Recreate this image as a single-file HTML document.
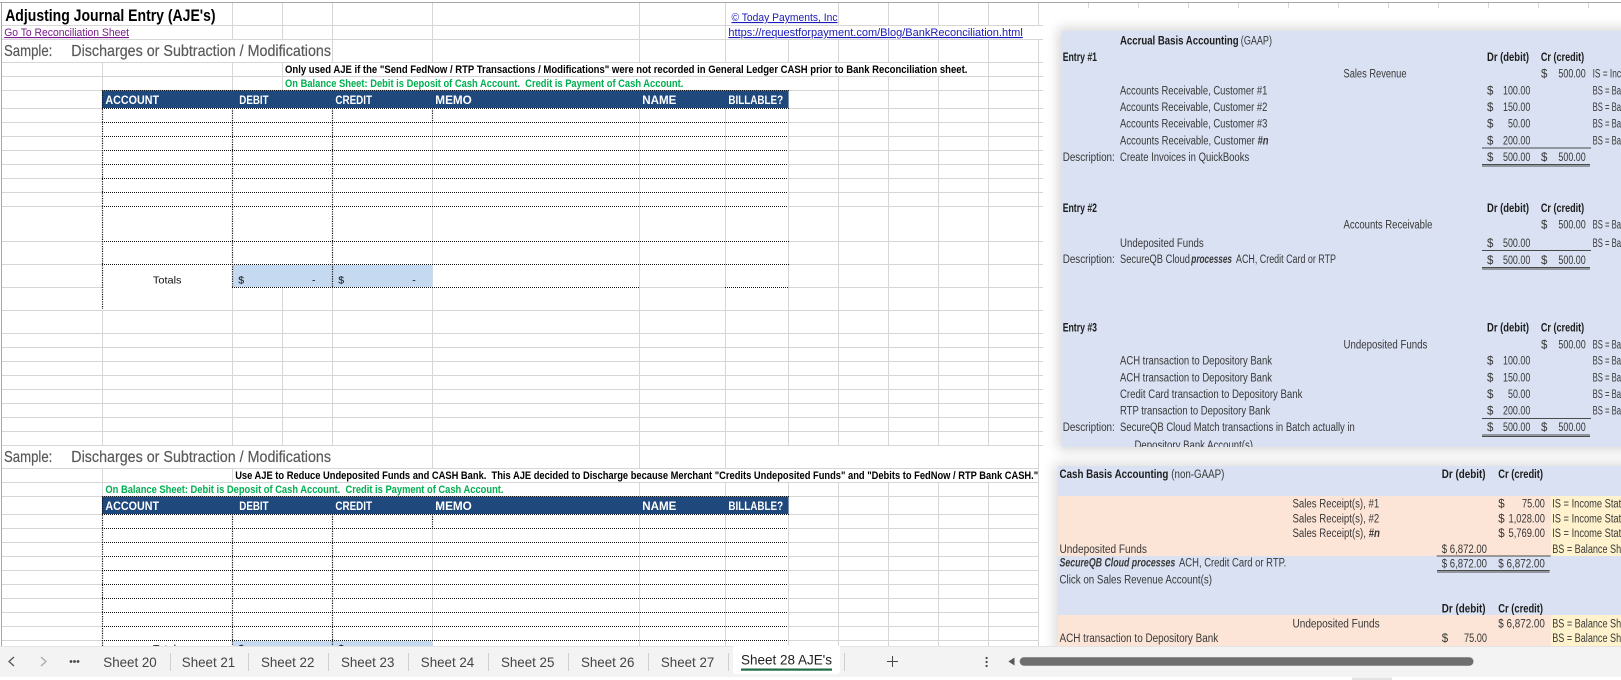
<!DOCTYPE html>
<html>
<head>
<meta charset="utf-8">
<title>Adjusting Journal Entry</title>
<style>
html,body{margin:0;padding:0;background:#fff;width:1621px;height:680px;overflow:hidden}
svg{display:block}
text{font-family:"Liberation Sans",sans-serif;white-space:pre}
.b{font-weight:700}
.n{font-size:11px;font-weight:700;fill:#000}
.g{font-size:11px;font-weight:700;fill:#00b050}
.h{font-size:12px;font-weight:700;fill:#fff}
.s{font-size:16px;fill:#595959;stroke:#595959;stroke-width:.2px}
.l{font-size:11px}
.p{font-size:11.5px;fill:#383838}
.pb{font-size:11.5px;fill:#1c1c1c;font-weight:700}
.t{font-size:14px;fill:#444}
.c{font-size:10.5px;fill:#111}
</style>
</head>
<body>
<svg xmlns="http://www.w3.org/2000/svg" width="1621" height="680" viewBox="0 0 1621 680">
<defs>
<filter id="sh" x="-10%" y="-10%" width="120%" height="120%"><feGaussianBlur stdDeviation="6"/></filter>
<clipPath id="c1"><rect x="1062" y="31" width="559" height="416"/></clipPath>
</defs>
<rect width="1621" height="680" fill="#fff"/>

<!-- horizontal grid -->
<path stroke="#d6d6d6" stroke-width="1" fill="none" d="M1 25.5H1043M1 39.5H1043M1 62.5H1043M1 76.5H1043M1 90.5H1043
M1 108.5H102M1 122.5H102M1 136.5H102M1 150.5H102M1 164.5H102M1 178.5H102M1 192.5H102M1 206.5H102M1 241.5H102M1 264.5H102M1 287.5H102
M789 108.5H1043M789 122.5H1043M789 136.5H1043M789 150.5H1043M789 164.5H1043M789 178.5H1043M789 192.5H1043M789 206.5H1043M789 241.5H1043M789 264.5H1043M789 287.5H1043M639 287.5H725
M1 310.5H1043M1 333.5H1043M1 347.5H1043M1 361.5H1043M1 375.5H1043M1 389.5H1043M1 403.5H1043M1 417.5H1043M1 431.5H1043M1 445.5H1043
M1 468.5H1038M1 482.5H1038
M1 496.5H102M1 514.5H102M1 528.5H102M1 542.5H102M1 556.5H102M1 570.5H102M1 584.5H102M1 598.5H102M1 612.5H102M1 626.5H102M1 640.5H102
M789 496.5H1038M789 514.5H1038M789 528.5H1038M789 542.5H1038M789 556.5H1038M789 570.5H1038M789 584.5H1038M789 598.5H1038M789 612.5H1038M789 626.5H1038M789 640.5H1038"/>
<!-- vertical grid -->
<path stroke="#d6d6d6" stroke-width="1" fill="none" d="M102.5 62V90M102.5 310V445M102.5 468V497
M232.5 2V39M232.5 62V90M232.5 287V445M232.5 468V482
M282.5 2V39M282.5 62V90M282.5 287V445
M332.5 2V62M332.5 287V445
M432.5 2V62M432.5 122V468M432.5 528V646
M639.5 2V62M639.5 108V468M639.5 482V496M639.5 514V646
M725.5 2V62M725.5 108V468M725.5 482V496M725.5 514V646
M788.5 39V62M788.5 90V445M788.5 482V646
M838.5 2V25M838.5 39V62M838.5 76V445M838.5 482V646
M888.5 2V25M888.5 39V62M888.5 76V445M888.5 482V646
M938.5 2V25M938.5 39V62M938.5 76V445M938.5 482V646
M988.5 2V25M988.5 39V445M988.5 482V646
M1038.5 2V25M1038.5 39V646"/>
<path stroke="#d6d6d6" fill="none" d="M1088.5 2V8M1138.5 2V8M1188.5 2V8M1238.5 2V8M1288.5 2V8M1338.5 2V8M1388.5 2V8M1438.5 2V8M1488.5 2V8M1538.5 2V8M1588.5 2V8"/>
<path stroke="#a6a6a6" stroke-width="1" fill="none" d="M0 2.5H1621M1.5 2V646"/>

<!-- top texts -->
<text x="5.2" y="21" class="b" font-size="16.5" fill="#000" textLength="210.4" lengthAdjust="spacingAndGlyphs">Adjusting Journal Entry (AJE's)</text>
<text x="4.2" y="36" class="l" fill="#7b1a8e" text-decoration="underline" textLength="124.8" lengthAdjust="spacingAndGlyphs">Go To Reconciliation Sheet</text>
<text x="731.5" y="21" class="l" fill="#1a1ab8" text-decoration="underline" textLength="106" lengthAdjust="spacingAndGlyphs">© Today Payments, Inc</text>
<text x="728.4" y="36" class="l" fill="#1a1ab8" text-decoration="underline" textLength="294.4" lengthAdjust="spacingAndGlyphs">https://requestforpayment.com/Blog/BankReconciliation.html</text>
<text x="4" y="56" class="s" textLength="48.3" lengthAdjust="spacingAndGlyphs">Sample:</text>
<text x="71.3" y="56" class="s" textLength="259.7" lengthAdjust="spacingAndGlyphs">Discharges or Subtraction / Modifications</text>
<text x="285" y="73" class="n" textLength="682.4" lengthAdjust="spacingAndGlyphs">Only used AJE if the "Send FedNow / RTP Transactions / Modifications" were not recorded in General Ledger CASH prior to Bank Reconciliation sheet.</text>
<text x="285" y="87" class="g" textLength="398.3" lengthAdjust="spacingAndGlyphs">On Balance Sheet: Debit is Deposit of Cash Account.  Credit is Payment of Cash Account.</text>

<!-- table 1 -->
<rect x="102" y="90.5" width="686.5" height="17.5" fill="#1f497d"/>
<rect x="232.5" y="265" width="200" height="22" fill="#c5d9f1"/>
<text x="105.4" y="104" class="h" textLength="53.6" lengthAdjust="spacingAndGlyphs">ACCOUNT</text>
<text x="239.3" y="104" class="h" textLength="29.3" lengthAdjust="spacingAndGlyphs">DEBIT</text>
<text x="335.4" y="104" class="h" textLength="36.6" lengthAdjust="spacingAndGlyphs">CREDIT</text>
<text x="435.3" y="104" class="h" textLength="36.5" lengthAdjust="spacingAndGlyphs">MEMO</text>
<text x="642.3" y="104" class="h" textLength="34.1" lengthAdjust="spacingAndGlyphs">NAME</text>
<text x="728.4" y="104" class="h" textLength="54.7" lengthAdjust="spacingAndGlyphs">BILLABLE?</text>
<path stroke="#111" stroke-width="1" stroke-dasharray="1 1" fill="none" d="M102 90.5H789M102 108.5H789M102 122.5H788M102 136.5H788M102 150.5H788M102 164.5H788M102 178.5H788M102 192.5H788M102 206.5H788M102 241.5H789M102 264.5H789M232 287.5H639M725 287.5H789"/>
<path stroke="#111" stroke-width="1.2" stroke-dasharray="1.2 1.2" fill="none" d="M102.5 90V309M232.5 108V287M332.5 108V287M432.5 108V122"/>
<text x="152.9" y="283.7" class="c" textLength="28.6" lengthAdjust="spacingAndGlyphs">Totals</text>
<text x="238.3" y="283.7" class="c">$</text><text x="312" y="283.7" class="c">-</text>
<text x="338.2" y="283.7" class="c">$</text><text x="412.2" y="283.7" class="c">-</text>

<!-- section 2 -->
<text x="4" y="462" class="s" textLength="48.3" lengthAdjust="spacingAndGlyphs">Sample:</text>
<text x="71.3" y="462" class="s" textLength="259.7" lengthAdjust="spacingAndGlyphs">Discharges or Subtraction / Modifications</text>
<text x="235.2" y="479" class="n" textLength="803" lengthAdjust="spacingAndGlyphs">Use AJE to Reduce Undeposited Funds and CASH Bank.  This AJE decided to Discharge because Merchant "Credits Undeposited Funds" and "Debits to FedNow / RTP Bank CASH."</text>
<text x="105.4" y="493" class="g" textLength="398.1" lengthAdjust="spacingAndGlyphs">On Balance Sheet: Debit is Deposit of Cash Account.  Credit is Payment of Cash Account.</text>
<rect x="102" y="496.5" width="686.5" height="17.5" fill="#1f497d"/>
<rect x="232.5" y="641" width="200" height="6" fill="#c5d9f1"/>
<text x="105.4" y="510" class="h" textLength="53.6" lengthAdjust="spacingAndGlyphs">ACCOUNT</text>
<text x="239.3" y="510" class="h" textLength="29.3" lengthAdjust="spacingAndGlyphs">DEBIT</text>
<text x="335.4" y="510" class="h" textLength="36.6" lengthAdjust="spacingAndGlyphs">CREDIT</text>
<text x="435.3" y="510" class="h" textLength="36.5" lengthAdjust="spacingAndGlyphs">MEMO</text>
<text x="642.3" y="510" class="h" textLength="34.1" lengthAdjust="spacingAndGlyphs">NAME</text>
<text x="728.4" y="510" class="h" textLength="54.7" lengthAdjust="spacingAndGlyphs">BILLABLE?</text>
<path stroke="#111" stroke-width="1" stroke-dasharray="1 1" fill="none" d="M102 496.5H789M102 514.5H789M102 528.5H788M102 542.5H788M102 556.5H788M102 570.5H788M102 584.5H788M102 598.5H788M102 612.5H788M102 626.5H788M102 640.5H788"/>
<path stroke="#111" stroke-width="1.2" stroke-dasharray="1.2 1.2" fill="none" d="M102.5 496V646M232.5 514V646M332.5 514V646M432.5 514V528"/>
<text x="152.9" y="652" class="c" textLength="28.6" lengthAdjust="spacingAndGlyphs">Totals</text>
<text x="238.3" y="652" class="c">$</text><text x="338.2" y="652" class="c">$</text>

<!-- panel shadows -->
<rect x="1058" y="28" width="580" height="422" fill="#000" opacity=".16" filter="url(#sh)"/>
<rect x="1054" y="463" width="580" height="190" fill="#000" opacity=".14" filter="url(#sh)"/>

<!-- panel 1 -->
<rect x="1062" y="31" width="559" height="416" fill="#d9e1f2"/>
<g clip-path="url(#c1)" style="filter:blur(.25px)">
<text x="1120" y="44.5" class="pb" textLength="118.6" lengthAdjust="spacingAndGlyphs">Accrual Basis Accounting</text>
<text x="1240.8" y="44.5" class="p" textLength="31.2" lengthAdjust="spacingAndGlyphs">(GAAP)</text>

<text x="1062.7" y="61" class="pb" textLength="34.3" lengthAdjust="spacingAndGlyphs">Entry #1</text>
<text x="1487" y="61" class="pb" textLength="42" lengthAdjust="spacingAndGlyphs">Dr (debit)</text>
<text x="1540.9" y="61" class="pb" textLength="43.3" lengthAdjust="spacingAndGlyphs">Cr (credit)</text>
<text x="1343.5" y="77.5" class="p" textLength="63" lengthAdjust="spacingAndGlyphs">Sales Revenue</text>
<text x="1541" y="77.5" class="p">$</text><text x="1558.4" y="77.5" class="p" textLength="27.3" lengthAdjust="spacingAndGlyphs">500.00</text>
<text x="1592.6" y="77.5" class="p" textLength="28.4" lengthAdjust="spacingAndGlyphs">IS = Inc</text>
<text x="1120" y="94.3" class="p" textLength="147.4" lengthAdjust="spacingAndGlyphs">Accounts Receivable, Customer #1</text>
<text x="1120" y="111" class="p" textLength="147.4" lengthAdjust="spacingAndGlyphs">Accounts Receivable, Customer #2</text>
<text x="1120" y="127.7" class="p" textLength="147.4" lengthAdjust="spacingAndGlyphs">Accounts Receivable, Customer #3</text>
<text x="1120" y="144.3" class="p" textLength="148.5" lengthAdjust="spacingAndGlyphs">Accounts Receivable, Customer <tspan font-weight="700" font-style="italic">#n</tspan></text>
<text x="1487" y="94.3" class="p">$</text><text x="1503" y="94.3" class="p" textLength="27.3" lengthAdjust="spacingAndGlyphs">100.00</text>
<text x="1487" y="111" class="p">$</text><text x="1503" y="111" class="p" textLength="27.3" lengthAdjust="spacingAndGlyphs">150.00</text>
<text x="1487" y="127.7" class="p">$</text><text x="1508" y="127.7" class="p" textLength="22.3" lengthAdjust="spacingAndGlyphs">50.00</text>
<text x="1487" y="144.3" class="p">$</text><text x="1503" y="144.3" class="p" textLength="27.3" lengthAdjust="spacingAndGlyphs">200.00</text>
<text x="1592.6" y="94.3" class="p" textLength="28.4" lengthAdjust="spacingAndGlyphs">BS = Ba</text>
<text x="1592.6" y="111" class="p" textLength="28.4" lengthAdjust="spacingAndGlyphs">BS = Ba</text>
<text x="1592.6" y="127.7" class="p" textLength="28.4" lengthAdjust="spacingAndGlyphs">BS = Ba</text>
<text x="1592.6" y="144.3" class="p" textLength="28.4" lengthAdjust="spacingAndGlyphs">BS = Ba</text>
<path stroke="#4a4a4a" stroke-width="1.1" fill="none" d="M1482 148H1591"/>
<text x="1062.7" y="161" class="p" textLength="52.1" lengthAdjust="spacingAndGlyphs">Description:</text>
<text x="1120" y="161" class="p" textLength="129.2" lengthAdjust="spacingAndGlyphs">Create Invoices in QuickBooks</text>
<text x="1487" y="161" class="p">$</text><text x="1503" y="161" class="p" textLength="27.3" lengthAdjust="spacingAndGlyphs">500.00</text>
<text x="1541" y="161" class="p">$</text><text x="1558.4" y="161" class="p" textLength="27.3" lengthAdjust="spacingAndGlyphs">500.00</text>
<path stroke="#4a4a4a" stroke-width="1.1" fill="none" d="M1482 164.5H1590M1482 166H1590"/>

<text x="1062.7" y="212" class="pb" textLength="34.3" lengthAdjust="spacingAndGlyphs">Entry #2</text>
<text x="1487" y="212" class="pb" textLength="42" lengthAdjust="spacingAndGlyphs">Dr (debit)</text>
<text x="1540.9" y="212" class="pb" textLength="43.3" lengthAdjust="spacingAndGlyphs">Cr (credit)</text>
<text x="1343.5" y="228.7" class="p" textLength="88.9" lengthAdjust="spacingAndGlyphs">Accounts Receivable</text>
<text x="1541" y="228.7" class="p">$</text><text x="1558.4" y="228.7" class="p" textLength="27.3" lengthAdjust="spacingAndGlyphs">500.00</text>
<text x="1592.6" y="228.7" class="p" textLength="28.4" lengthAdjust="spacingAndGlyphs">BS = Ba</text>
<text x="1120" y="247" class="p" textLength="83.7" lengthAdjust="spacingAndGlyphs">Undeposited Funds</text>
<text x="1487" y="247" class="p">$</text><text x="1503" y="247" class="p" textLength="27.3" lengthAdjust="spacingAndGlyphs">500.00</text>
<text x="1592.6" y="247" class="p" textLength="28.4" lengthAdjust="spacingAndGlyphs">BS = Ba</text>
<path stroke="#4a4a4a" stroke-width="1.1" fill="none" d="M1482 250.5H1591"/>
<text x="1062.7" y="263" class="p" textLength="52.1" lengthAdjust="spacingAndGlyphs">Description:</text>
<text x="1120" y="263" class="p" textLength="70" lengthAdjust="spacingAndGlyphs">SecureQB Cloud</text>
<text x="1191.3" y="263" class="p" font-weight="700" font-style="italic" textLength="40.7" lengthAdjust="spacingAndGlyphs">processes</text>
<text x="1236" y="263" class="p" textLength="100" lengthAdjust="spacingAndGlyphs">ACH, Credit Card or RTP</text>
<text x="1487" y="264" class="p">$</text><text x="1503" y="264" class="p" textLength="27.3" lengthAdjust="spacingAndGlyphs">500.00</text>
<text x="1541" y="264" class="p">$</text><text x="1558.4" y="264" class="p" textLength="27.3" lengthAdjust="spacingAndGlyphs">500.00</text>
<path stroke="#4a4a4a" stroke-width="1.1" fill="none" d="M1482 267.5H1590M1482 269H1590"/>

<text x="1062.7" y="331.3" class="pb" textLength="34.3" lengthAdjust="spacingAndGlyphs">Entry #3</text>
<text x="1487" y="331.3" class="pb" textLength="42" lengthAdjust="spacingAndGlyphs">Dr (debit)</text>
<text x="1540.9" y="331.3" class="pb" textLength="43.3" lengthAdjust="spacingAndGlyphs">Cr (credit)</text>
<text x="1343.5" y="348.3" class="p" textLength="83.8" lengthAdjust="spacingAndGlyphs">Undeposited Funds</text>
<text x="1541" y="348.3" class="p">$</text><text x="1558.4" y="348.3" class="p" textLength="27.3" lengthAdjust="spacingAndGlyphs">500.00</text>
<text x="1592.6" y="348.3" class="p" textLength="28.4" lengthAdjust="spacingAndGlyphs">BS = Ba</text>
<text x="1120" y="364.7" class="p" textLength="152" lengthAdjust="spacingAndGlyphs">ACH transaction to Depository Bank</text>
<text x="1120" y="381.3" class="p" textLength="152" lengthAdjust="spacingAndGlyphs">ACH transaction to Depository Bank</text>
<text x="1120" y="398" class="p" textLength="182.4" lengthAdjust="spacingAndGlyphs">Credit Card transaction to Depository Bank</text>
<text x="1120" y="414.7" class="p" textLength="150.3" lengthAdjust="spacingAndGlyphs">RTP transaction to Depository Bank</text>
<text x="1487" y="364.7" class="p">$</text><text x="1503" y="364.7" class="p" textLength="27.3" lengthAdjust="spacingAndGlyphs">100.00</text>
<text x="1487" y="381.3" class="p">$</text><text x="1503" y="381.3" class="p" textLength="27.3" lengthAdjust="spacingAndGlyphs">150.00</text>
<text x="1487" y="398" class="p">$</text><text x="1508" y="398" class="p" textLength="22.3" lengthAdjust="spacingAndGlyphs">50.00</text>
<text x="1487" y="414.7" class="p">$</text><text x="1503" y="414.7" class="p" textLength="27.3" lengthAdjust="spacingAndGlyphs">200.00</text>
<text x="1592.6" y="364.7" class="p" textLength="28.4" lengthAdjust="spacingAndGlyphs">BS = Ba</text>
<text x="1592.6" y="381.3" class="p" textLength="28.4" lengthAdjust="spacingAndGlyphs">BS = Ba</text>
<text x="1592.6" y="398" class="p" textLength="28.4" lengthAdjust="spacingAndGlyphs">BS = Ba</text>
<text x="1592.6" y="414.7" class="p" textLength="28.4" lengthAdjust="spacingAndGlyphs">BS = Ba</text>
<path stroke="#4a4a4a" stroke-width="1.1" fill="none" d="M1482 418.5H1591"/>
<text x="1062.7" y="431" class="p" textLength="52.1" lengthAdjust="spacingAndGlyphs">Description:</text>
<text x="1120" y="431" class="p" textLength="234.8" lengthAdjust="spacingAndGlyphs">SecureQB Cloud Match transactions in Batch actually in</text>
<text x="1487" y="431" class="p">$</text><text x="1503" y="431" class="p" textLength="27.3" lengthAdjust="spacingAndGlyphs">500.00</text>
<text x="1541" y="431" class="p">$</text><text x="1558.4" y="431" class="p" textLength="27.3" lengthAdjust="spacingAndGlyphs">500.00</text>
<path stroke="#4a4a4a" stroke-width="1.1" fill="none" d="M1482 435H1590M1482 436.5H1590"/>
<text x="1134.5" y="449" class="p" textLength="118.5" lengthAdjust="spacingAndGlyphs">Depository Bank Account(s)</text>
</g>

<!-- panel 2 -->
<rect x="1058" y="466" width="563" height="180" fill="#d9e1f2"/>
<rect x="1058" y="496" width="492.7" height="60" fill="#fce4d6"/>
<rect x="1550.7" y="496" width="70.3" height="60" fill="#fff2cc"/>
<rect x="1058" y="615" width="492.7" height="31" fill="#fce4d6"/>
<rect x="1550.7" y="615" width="70.3" height="31" fill="#fff2cc"/>
<g style="filter:blur(.2px)">
<text x="1059.5" y="478" class="pb" textLength="108.9" lengthAdjust="spacingAndGlyphs">Cash Basis Accounting</text>
<text x="1171.3" y="478" class="p" textLength="53.1" lengthAdjust="spacingAndGlyphs">(non-GAAP)</text>
<text x="1441.8" y="478" class="pb" textLength="43.7" lengthAdjust="spacingAndGlyphs">Dr (debit)</text>
<text x="1498.3" y="478" class="pb" textLength="44.7" lengthAdjust="spacingAndGlyphs">Cr (credit)</text>
<text x="1292.5" y="507.7" class="p" textLength="86.7" lengthAdjust="spacingAndGlyphs">Sales Receipt(s), #1</text>
<text x="1292.5" y="522.3" class="p" textLength="86.7" lengthAdjust="spacingAndGlyphs">Sales Receipt(s), #2</text>
<text x="1292.5" y="537" class="p" textLength="87.4" lengthAdjust="spacingAndGlyphs">Sales Receipt(s), <tspan font-weight="700" font-style="italic">#n</tspan></text>
<text x="1498.3" y="507.7" class="p">$</text><text x="1522" y="507.7" class="p" textLength="22.9" lengthAdjust="spacingAndGlyphs">75.00</text>
<text x="1498.3" y="522.3" class="p">$</text><text x="1508.5" y="522.3" class="p" textLength="36.4" lengthAdjust="spacingAndGlyphs">1,028.00</text>
<text x="1498.3" y="537" class="p">$</text><text x="1508.5" y="537" class="p" textLength="36.4" lengthAdjust="spacingAndGlyphs">5,769.00</text>
<text x="1552.2" y="507.7" class="p" textLength="69" lengthAdjust="spacingAndGlyphs">IS = Income Stat</text>
<text x="1552.2" y="522.3" class="p" textLength="69" lengthAdjust="spacingAndGlyphs">IS = Income Stat</text>
<text x="1552.2" y="537" class="p" textLength="69" lengthAdjust="spacingAndGlyphs">IS = Income Stat</text>
<text x="1059.5" y="553" class="p" textLength="87.4" lengthAdjust="spacingAndGlyphs">Undeposited Funds</text>
<text x="1441.8" y="553" class="p" textLength="45.2" lengthAdjust="spacingAndGlyphs">$ 6,872.00</text>
<text x="1552.2" y="553" class="p" textLength="69" lengthAdjust="spacingAndGlyphs">BS = Balance Sh</text>
<path stroke="#4a4a4a" stroke-width="1.1" fill="none" d="M1436.7 556H1550.7"/>
<text x="1059.5" y="566.7" class="p" font-weight="700" font-style="italic" textLength="115.8" lengthAdjust="spacingAndGlyphs">SecureQB Cloud processes</text>
<text x="1179" y="566.7" class="p" textLength="107.3" lengthAdjust="spacingAndGlyphs">ACH, Credit Card or RTP.</text>
<text x="1441.8" y="567.7" class="p" textLength="45.2" lengthAdjust="spacingAndGlyphs">$ 6,872.00</text>
<text x="1498.3" y="567.7" class="p" textLength="46.6" lengthAdjust="spacingAndGlyphs">$ 6,872.00</text>
<path stroke="#4a4a4a" stroke-width="1.1" fill="none" d="M1437 570.5H1549.6M1437 572H1549.6"/>
<text x="1059.5" y="583.7" class="p" textLength="152.5" lengthAdjust="spacingAndGlyphs">Click on Sales Revenue Account(s)</text>
<text x="1441.8" y="612.7" class="pb" textLength="43.7" lengthAdjust="spacingAndGlyphs">Dr (debit)</text>
<text x="1498.3" y="612.7" class="pb" textLength="44.7" lengthAdjust="spacingAndGlyphs">Cr (credit)</text>
<text x="1292.5" y="627.3" class="p" textLength="87.1" lengthAdjust="spacingAndGlyphs">Undeposited Funds</text>
<text x="1498.3" y="627.3" class="p" textLength="46.6" lengthAdjust="spacingAndGlyphs">$ 6,872.00</text>
<text x="1552.2" y="627.3" class="p" textLength="69" lengthAdjust="spacingAndGlyphs">BS = Balance Sh</text>
<text x="1059.5" y="642" class="p" textLength="158.7" lengthAdjust="spacingAndGlyphs">ACH transaction to Depository Bank</text>
<text x="1441.8" y="642" class="p">$</text><text x="1464" y="642" class="p" textLength="23" lengthAdjust="spacingAndGlyphs">75.00</text>
<text x="1552.2" y="642" class="p" textLength="69" lengthAdjust="spacingAndGlyphs">BS = Balance Sh</text>
</g>

<!-- tab bar -->
<rect x="0" y="646" width="1621" height="31" fill="#f3f3f3"/>
<rect x="0" y="646" width="1621" height="1" fill="#e3e3e3"/>
<rect x="1352" y="677.5" width="40" height="2.5" fill="#e4e4e4"/>
<path d="M14 657L9 661.5L14 666" fill="none" stroke="#555" stroke-width="1.3"/>
<path d="M41 657L46 661.5L41 666" fill="none" stroke="#aaa" stroke-width="1.3"/>
<circle cx="71" cy="661.5" r="1.4" fill="#444"/><circle cx="74.5" cy="661.5" r="1.4" fill="#444"/><circle cx="78" cy="661.5" r="1.4" fill="#444"/>
<text x="103.3" y="667" class="t" textLength="53.4" lengthAdjust="spacingAndGlyphs">Sheet 20</text>
<text x="181.8" y="667" class="t" textLength="53.4" lengthAdjust="spacingAndGlyphs">Sheet 21</text>
<text x="261" y="667" class="t" textLength="53.4" lengthAdjust="spacingAndGlyphs">Sheet 22</text>
<text x="341" y="667" class="t" textLength="53.4" lengthAdjust="spacingAndGlyphs">Sheet 23</text>
<text x="420.8" y="667" class="t" textLength="53.4" lengthAdjust="spacingAndGlyphs">Sheet 24</text>
<text x="501" y="667" class="t" textLength="53.4" lengthAdjust="spacingAndGlyphs">Sheet 25</text>
<text x="581" y="667" class="t" textLength="53.4" lengthAdjust="spacingAndGlyphs">Sheet 26</text>
<text x="660.9" y="667" class="t" textLength="53.4" lengthAdjust="spacingAndGlyphs">Sheet 27</text>
<path stroke="#cfcfcf" fill="none" d="M170.5 653V671M248.5 653V671M328.5 653V671M408.5 653V671M488.5 653V671M568.5 653V671M648.5 653V671M728.5 653V671M844.5 653V671"/>
<rect x="733" y="645" width="107" height="29" rx="3" fill="#fff"/>
<text x="741" y="664.3" font-size="14" fill="#222" textLength="91" lengthAdjust="spacingAndGlyphs">Sheet 28 AJE's</text>
<rect x="741" y="668.5" width="91" height="2.2" fill="#1e6b45"/>
<path d="M887 661.5H898M892.5 656V667" stroke="#444" stroke-width="1" fill="none"/>
<circle cx="986.6" cy="658" r="1.1" fill="#444"/><circle cx="986.6" cy="662" r="1.1" fill="#444"/><circle cx="986.6" cy="666" r="1.1" fill="#444"/>
<path d="M1014.5 657.5V665.5L1008.4 661.5Z" fill="#595959"/>
<rect x="1019.7" y="657.3" width="453.8" height="8.4" rx="4.2" fill="#6e6e6e"/>
</svg>
</body>
</html>
